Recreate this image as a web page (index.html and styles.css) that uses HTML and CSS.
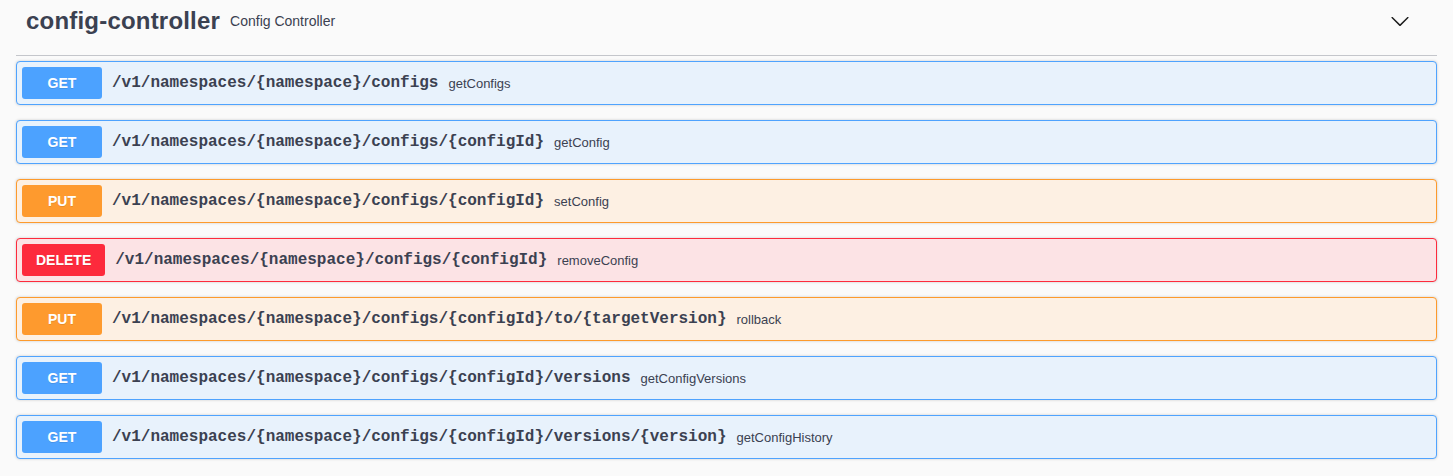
FILE: index.html
```html
<!DOCTYPE html>
<html>
<head>
<meta charset="utf-8">
<link rel="stylesheet" href="styles.css">
</head>
<body>
<div class="wrap">
  <div class="tag">
    <h3 class="tag-title">config-controller</h3>
    <small class="tag-desc">Config Controller</small>
    <span class="spacer"></span>
    <svg class="chev" width="20" height="20" viewBox="0 0 20 20"><path d="M17.418 6.109c.272-.268.709-.268.979 0s.271.701 0 .969l-7.908 7.83c-.27.268-.707.268-.979 0l-7.908-7.830c-.27-.268-.27-.701 0-.969.271-.268.709-.268.979 0L10 13.25l7.418-7.141z" fill="#1b1b1b"/></svg>
  </div>
  <div class="op get"><span class="method">GET</span><span class="path">/v1/namespaces/{namespace}/configs</span><span class="desc">getConfigs</span></div>
  <div class="op get"><span class="method">GET</span><span class="path">/v1/namespaces/{namespace}/configs/{configId}</span><span class="desc">getConfig</span></div>
  <div class="op put"><span class="method">PUT</span><span class="path">/v1/namespaces/{namespace}/configs/{configId}</span><span class="desc">setConfig</span></div>
  <div class="op delete"><span class="method">DELETE</span><span class="path">/v1/namespaces/{namespace}/configs/{configId}</span><span class="desc">removeConfig</span></div>
  <div class="op put"><span class="method">PUT</span><span class="path">/v1/namespaces/{namespace}/configs/{configId}/to/{targetVersion}</span><span class="desc">rollback</span></div>
  <div class="op get"><span class="method">GET</span><span class="path">/v1/namespaces/{namespace}/configs/{configId}/versions</span><span class="desc">getConfigVersions</span></div>
  <div class="op get"><span class="method">GET</span><span class="path">/v1/namespaces/{namespace}/configs/{configId}/versions/{version}</span><span class="desc">getConfigHistory</span></div>
</div>
</body>
</html>
```
FILE: styles.css
```css
html, body {
  margin: 0;
  padding: 0;
  background: #fafafa;
}
body {
  font-family: "Liberation Sans", Arial, sans-serif;
  color: #3b4151;
}
.wrap {
  padding: 0 16px;
}
.tag {
  display: flex;
  align-items: center;
  height: 39px;
  padding: 1px 0 15px 10px;
  border-bottom: 1px solid #c4c6cb;
  margin-bottom: 5px;
}
.tag-title {
  margin: 0;
  font-size: 24px;
  font-weight: 700;
  letter-spacing: 0.2px;
  color: #3b4151;
  line-height: 30px;
}
.tag-desc {
  font-size: 14px;
  padding: 0 10px;
  margin-top: 1px;
  color: #3b4151;
}
.spacer {
  flex: 1;
}
.chev {
  display: block;
  margin-right: 27px;
}
.op {
  display: flex;
  align-items: center;
  height: 32px;
  padding: 5px;
  margin-bottom: 15px;
  border: 1px solid;
  border-radius: 4px;
  box-shadow: 0 0 3px rgba(0,0,0,.19);
}
.method {
  min-width: 80px;
  box-sizing: border-box;
  height: 32px;
  line-height: 32px;
  padding: 0 15px;
  border-radius: 3px;
  text-align: center;
  color: #fff;
  font-size: 14px;
  font-weight: 700;
  text-shadow: 0 1px 0 rgba(0,0,0,.1);
}
.path {
  padding: 0 10px;
  font-family: "Liberation Mono", "Courier New", monospace;
  font-size: 16px;
  font-weight: 700;
  color: #3b4151;
}
.desc {
  font-size: 13px;
  color: #3b4151;
}
.get {
  background: #e8f2fc;
  border-color: #4fa3fe;
}
.get .method { background: #4ca2ff; }
.put {
  background: #fdf0e3;
  border-color: #fd9a2c;
}
.put .method { background: #fe9a2e; }
.delete {
  background: #fce3e5;
  border-color: #fd2a3c;
}
.delete .method {
  background: #fd2a3c;
  padding: 0 14px;
}
```
